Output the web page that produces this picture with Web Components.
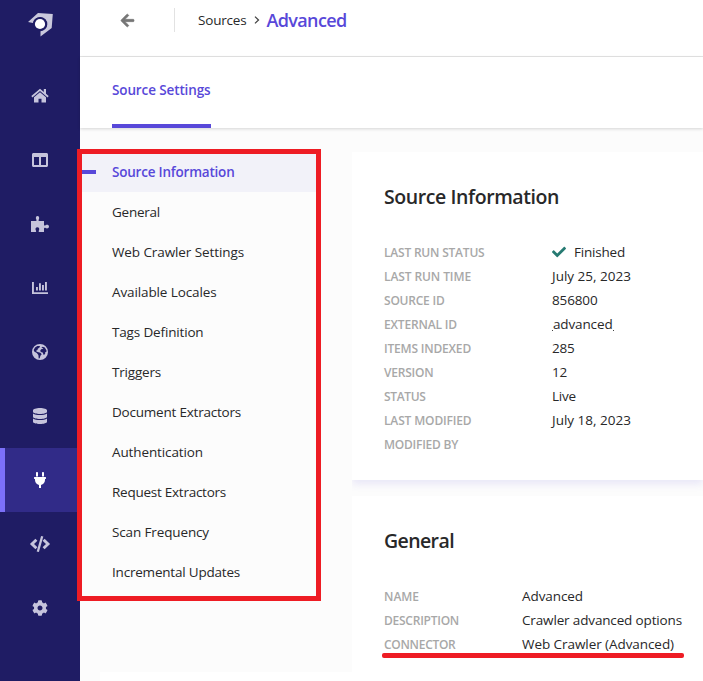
<!DOCTYPE html>
<html lang="en">
<head>
<meta charset="utf-8">
<title>Advanced - Source Settings</title>
<style>
body{margin:0;width:703px;height:681px;overflow:hidden;background:#fff;font-family:"Open Sans","Noto Sans",sans-serif;font-size:13.5px;color:#282829}
</style>
</head>
<body>
<source-page></source-page>
<script>
const icons={
home:['0 0 18 16','<path d="M9 .8.3 8l1.100 1.400L9 3.100l7.600 6.300L17.700 8 15 5.700V.9h-2.200v3z"/><path d="M9 4.300 3 9.200v5.300h4.500v-3.700h3v3.700H15V9.200z"/>'],
columns:['0 0 512 512','<path d="M464 32H48C21.5 32 0 53.500 0 80v352c0 26.500 21.500 48 48 48h416c26.500 0 48-21.500 48-48V80c0-26.500-21.500-48-48-48zM224 416H64V160h160v256zm224 0H288V160h160v256z"/>'],
puzzle:['0 0 18 16','<path d="M0 5h4.700c1 0 1.100-.8.6-1.500C4.400 2 4.900 0 6.500 0s2.200 2 1.300 3.500C7.300 4.300 7.500 5 8.400 5H13v3.700c0 1 .9 1.100 1.600.5 1.400-1 3.400-.4 3.400 1.400s-2 2.400-3.400 1.500c-.8-.5-1.600-.2-1.600.7V16H8.600c-1 0-1.200-.8-.7-1.600.8-1.300.3-3.100-1.500-3.100s-2.400 1.800-1.500 3.200c.5.8.3 1.500-.7 1.500H0z"/>'],
chart:['0 0 16 16','<path d="M0 2h1.900v10.200H16V14H0zM4 7h1.900v3.400H4zM7 3.200h1.900v7.200H7zM10 5h1.900v5.400H10zM13 2h1.900v8.400H13z"/>'],
globe:['0 0 16 16','<path fill-rule="evenodd" d="M8 0a8 8 0 1 0 0 16A8 8 0 0 0 8 0M3 3.500 5.300 2 8 2.100 7.500 3.500 5.800 4.700 5.500 6 3.800 6.900 5.600 8l2.800.7 1.300 1.600-1.300 1.500-.7 2.500-1 .1-.3-3.300L4.800 9 2.200 7.600 1.700 6zM10.500 2.700l2.300.7 1.700 3-.2 1.500-1 .2-.2 2-1.400.8-1-2.400-2-.4-.4-1.800 1.300-1.300 1.700-.2-.6-.9-1.300.2z"/>'],
database:['-32 0 512 512','<path d="M448 73.143v45.714C448 159.143 347.667 192 224 192S0 159.143 0 118.857V73.143C0 32.857 100.333 0 224 0s224 32.857 224 73.143zM448 176v102.857C448 319.143 347.667 352 224 352S0 319.143 0 278.857V176c48.125 33.143 136.208 48.572 224 48.572S399.874 209.143 448 176zm0 160v102.857C448 479.143 347.667 512 224 512S0 479.143 0 438.857V336c48.125 33.143 136.208 48.572 224 48.572S399.874 369.143 448 336z"/>'],
plug:['-64 0 512 512','<path d="M256 144V32c0-17.673 14.327-32 32-32s32 14.327 32 32v112h-64zm112 16H16c-8.837 0-16 7.163-16 16v32c0 8.837 7.163 16 16 16h16v32c0 77.406 54.969 141.971 128 156.796V512h64v-99.204c73.031-14.825 128-79.39 128-156.796v-32h16c8.837 0 16-7.163 16-16v-32c0-8.837-7.163-16-16-16zm-240-16V32c0-17.673-14.327-32-32-32S64 14.327 64 32v112h64z"/>'],
code:['0 0 20 16','<g fill="none" stroke="currentColor" stroke-width="2.900"><path d="M6.400 3.700 2 8l4.400 4.300M13.600 3.700 18 8l-4.400 4.300"/><path d="M12.200.3 7.800 15.700" stroke-width="2.300"/></g>'],
cog:['0 0 512 512','<path d="M487.4 315.7l-42.6-24.6c4.3-23.2 4.3-47 0-70.2l42.6-24.6c4.9-2.8 7.1-8.6 5.5-14-11.1-35.6-30-67.8-54.7-94.6-3.8-4.1-10-5.1-14.8-2.3L380.8 110c-17.9-15.4-38.5-27.3-60.8-35.1V25.8c0-5.6-3.9-10.5-9.4-11.7-36.7-8.2-74.3-7.8-109.2 0-5.5 1.2-9.4 6.1-9.4 11.7V75c-22.2 7.9-42.8 19.8-60.8 35.1L88.7 85.5c-4.9-2.8-11-1.9-14.8 2.3-24.7 26.7-43.6 58.9-54.7 94.6-1.7 5.4.6 11.2 5.5 14L67.3 221c-4.3 23.2-4.3 47 0 70.2l-42.6 24.6c-4.9 2.8-7.1 8.6-5.5 14 11.1 35.6 30 67.8 54.7 94.6 3.8 4.1 10 5.1 14.8 2.3l42.6-24.6c17.9 15.4 38.5 27.3 60.8 35.1v49.2c0 5.6 3.9 10.5 9.4 11.7 36.7 8.2 74.3 7.8 109.2 0 5.5-1.2 9.4-6.1 9.4-11.7v-49.2c22.2-7.9 42.8-19.8 60.8-35.1l42.6 24.6c4.900 2.800 11 1.900 14.800-2.300 24.700-26.700 43.600-58.900 54.700-94.600 1.500-5.500-.7-11.300-5.600-14.100zM256 336c-44.100 0-80-35.900-80-80s35.900-80 80-80 80 35.900 80 80-35.900 80-80 80z"/>'],
back:['0 0 448 512','<path stroke="currentColor" stroke-width="22" d="M257.5 445.1l-22.2 22.2c-9.4 9.4-24.6 9.4-33.9 0L7 273c-9.4-9.4-9.4-24.6 0-33.9L201.4 44.7c9.4-9.4 24.6-9.4 33.9 0l22.2 22.2c9.5 9.5 9.3 25-.4 34.3L136.6 216H424c13.3 0 24 10.7 24 24v32c0 13.3-10.7 24-24 24H136.6l120.5 114.8c9.8 9.3 10 24.8.4 34.3z"/>'],
check:['0 0 512 512','<path d="M173.898 439.404l-166.4-166.4c-9.997-9.997-9.997-26.206 0-36.204l36.203-36.204c9.997-9.998 26.207-9.998 36.204 0L192 312.69 432.095 72.596c9.997-9.997 26.207-9.997 36.204 0l36.203 36.204c9.997 9.997 9.997 26.206 0 36.204l-294.4 294.401c-9.998 9.997-26.207 9.997-36.204-.001z"/>'],
chevron:['0 0 6 8','<path d="m1 .6 3.500 3.400L1 7.400" fill="none" stroke="#444" stroke-width="1.300"/>'],
logo:['24 8 32 32','<path d="M28 22 38 13l14.800 1-1.100 14-11.200 8.600V31.300A7.200 7.200 0 1 0 33 23z"/><circle cx="40" cy="24" r="6.800" fill="#1f1c64"/><circle cx="40" cy="24" r="5.100" fill="#fff"/>']
};
class Base extends HTMLElement{
  constructor(){super();this.attachShadow({mode:'open'})}
  connectedCallback(){this.shadowRoot.innerHTML='<style>*{box-sizing:border-box}'+this.css()+'</style>'+this.html()}
  css(){return ':host{display:block}'}
  html(){return '<slot></slot>'}
}
const def=(n,css,html)=>customElements.define(n,class extends Base{css(){return css}html(){return typeof html==='function'?html(this):html}});

/* Spreads a line of text evenly over the width given in its w attribute. */
customElements.define('fit-text',class extends Base{
  css(){return ':host{display:inline-block;white-space:pre}'}
  connectedCallback(){
    super.connectedCallback();
    const w=+this.getAttribute('w')-.5;
    if(w>0)this.style.letterSpacing=(w-this.getBoundingClientRect().width)/this.textContent.length+'px';
  }
});
def('ui-icon',':host{display:inline-flex}svg{display:block;fill:currentColor;overflow:visible}',e=>{
  const [vb,p]=icons[e.getAttribute('name')];
  return `<svg viewBox="${vb}" width="${e.getAttribute('width')||16}" height="${e.getAttribute('height')||16}">${p}</svg>`;
});
def('rail-item',`:host{display:flex;height:64px;align-items:center;justify-content:center;color:#c6c4dc}
:host([active]){background:#312b88;color:#fff;border-left:5px solid #7b70f9;padding-right:5px}`,
e=>`<ui-icon name="${e.getAttribute('icon')}" width="${e.getAttribute('size')||16}"></ui-icon>`);
def('side-rail',`:host{display:flex;flex-direction:column;width:80px;height:681px;background:#1f1c64;color:#c9c8dc}
.logo{height:64px;padding:8px 24px}`,
`<div class="logo"><ui-icon name="logo" width="32" height="32"></ui-icon></div>
<rail-item icon="home" size="18"></rail-item><rail-item icon="columns"></rail-item><rail-item icon="puzzle" size="18"></rail-item><rail-item icon="chart"></rail-item><rail-item icon="globe"></rail-item><rail-item icon="database"></rail-item><rail-item icon="plug" active></rail-item><rail-item icon="code" size="20"></rail-item><rail-item icon="cog"></rail-item>`);
def('top-bar',`:host{display:flex;box-sizing:border-box;height:57px;padding:8px 0 24px 41px;border-bottom:1px solid #e5e5e5;background:#fff}
.back{color:#767676;width:53px;height:24px;display:flex;align-items:center;padding-top:1px}
.crumbs{height:24px;border-left:1px solid #e2e2e2;padding-left:23px;display:flex;align-items:center}
.chev{margin:0 7px 0 7px;width:6px;display:flex}
.now{font-size:18px;font-weight:600;color:#5848d9;line-height:24px}`,
`<div class="back"><ui-icon name="back" width="13" height="15"></ui-icon></div><div class="crumbs"><fit-text w="49">Sources</fit-text><span class="chev"><ui-icon name="chevron" width="6" height="8"></ui-icon></span><fit-text class="now" w="80.500">Advanced</fit-text></div>`);
def('tab-bar',`:host{display:flex;box-sizing:border-box;height:71px;padding-left:32px;background:#fff;box-shadow:0 1px 3px rgba(0,0,0,.16);position:relative}
.tab{height:71px;width:99px;border-bottom:4px solid #5848d9;color:#5848d9;font-weight:600;line-height:67px}`,
`<div class="tab"><fit-text w="99">Source Settings</fit-text></div>`);
def('nav-item',`:host{display:flex;box-sizing:border-box;height:40px;align-items:center;line-height:20px;padding-left:32px}
:host([active]){background:#f2f2f9;color:#5848d9;font-weight:600;padding-left:0}
.dash{display:none}:host([active]) .dash{display:block;width:16px;height:4px;background:#5848d9;margin-right:16px}`,
'<span class="dash"></span><slot></slot>');
const nav=[['Source Information',123],['General',48.5],['Web Crawler Settings',132.5],['Available Locales',105],['Tags Definition',92],['Triggers',49.5],['Document Extractors',129.5],['Authentication',91.5],['Request Extractors',114.5],['Scan Frequency',97.5],['Incremental Updates',128.5]];
def('source-nav',':host{display:block;width:240px}',nav.map(([t,w],i)=>`<nav-item${i?'':' active'}><fit-text w="${w}">${t}</fit-text></nav-item>`).join(''));
def('info-row',`:host{display:flex;height:24px;line-height:24px}
.label{flex:none;width:var(--label-width,168px);padding-top:1px;font-size:12px;font-weight:600;color:#a8a8a8}.value{display:flex;align-items:center;white-space:nowrap}
::slotted(ui-icon){color:#267a72;margin-right:8px}`,
e=>`<div class="label"><fit-text w="${e.getAttribute('lw')}">${e.getAttribute('label')}</fit-text></div><div class="value"><slot></slot></div>`);
def('info-card',`:host{display:block;box-sizing:border-box;background:#fff;padding:31px 32px 0;box-shadow:0 4px 8px rgba(88,72,217,.12);clip-path:inset(0 0 -16px 0)}
.title{font-size:19.5px;font-weight:600;line-height:28px;height:57px}`,
'<div class="title"><slot name="title"></slot></div><slot></slot>');
def('source-page',`:host{display:flex;position:relative;width:703px;height:681px;overflow:hidden}
main{width:623px}
.body{display:flex;gap:32px;height:553px;padding-top:24px;background:linear-gradient(#fff,#fff) 20px 544px/603px 9px no-repeat #fcfcfc}
.cards{width:351px;display:flex;flex-direction:column;gap:16px}
.one{height:328px}.two{height:185px;--label-width:138px}
.frame{position:absolute;left:77px;top:149px;width:244px;height:452px;border:5px solid #ee1c24}
.mark{position:absolute;left:382px;top:653px;width:302px;height:5px;border-radius:2px;background:#ee1c24}
.dot{width:1px;height:1px;background:#444;align-self:flex-end;margin-bottom:5px}`,
`<side-rail></side-rail><main><top-bar></top-bar><tab-bar></tab-bar><div class="body"><source-nav></source-nav><div class="cards">
<info-card class="one"><fit-text slot="title" w="175.500">Source Information</fit-text>
<info-row label="LAST RUN STATUS" lw="101"><ui-icon name="check" width="14" height="14"></ui-icon><fit-text w="51.500">Finished</fit-text></info-row>
<info-row label="LAST RUN TIME" lw="87.500"><fit-text w="79.500">July 25, 2023</fit-text></info-row>
<info-row label="SOURCE ID" lw="61"><fit-text w="46">856800</fit-text></info-row>
<info-row label="EXTERNAL ID" lw="73.500"><span class="dot"></span><fit-text w="60">advanced</fit-text><span class="dot"></span></info-row>
<info-row label="ITEMS INDEXED" lw="87.500"><fit-text w="23">285</fit-text></info-row>
<info-row label="VERSION" lw="50"><fit-text w="15.500">12</fit-text></info-row>
<info-row label="STATUS" lw="42"><fit-text w="24.500">Live</fit-text></info-row>
<info-row label="LAST MODIFIED" lw="88"><fit-text w="79.500">July 18, 2023</fit-text></info-row>
<info-row label="MODIFIED BY" lw="74.500"></info-row></info-card>
<info-card class="two"><fit-text slot="title" w="70.500">General</fit-text>
<info-row label="NAME" lw="35.500"><fit-text w="61.500">Advanced</fit-text></info-row>
<info-row label="DESCRIPTION" lw="75.500"><fit-text w="160.500">Crawler advanced options</fit-text></info-row>
<info-row label="CONNECTOR" lw="72"><fit-text w="152.500">Web Crawler (Advanced)</fit-text></info-row></info-card>
</div></div></main><div class="frame"></div><div class="mark"></div>`);
</script>
</body>
</html>
